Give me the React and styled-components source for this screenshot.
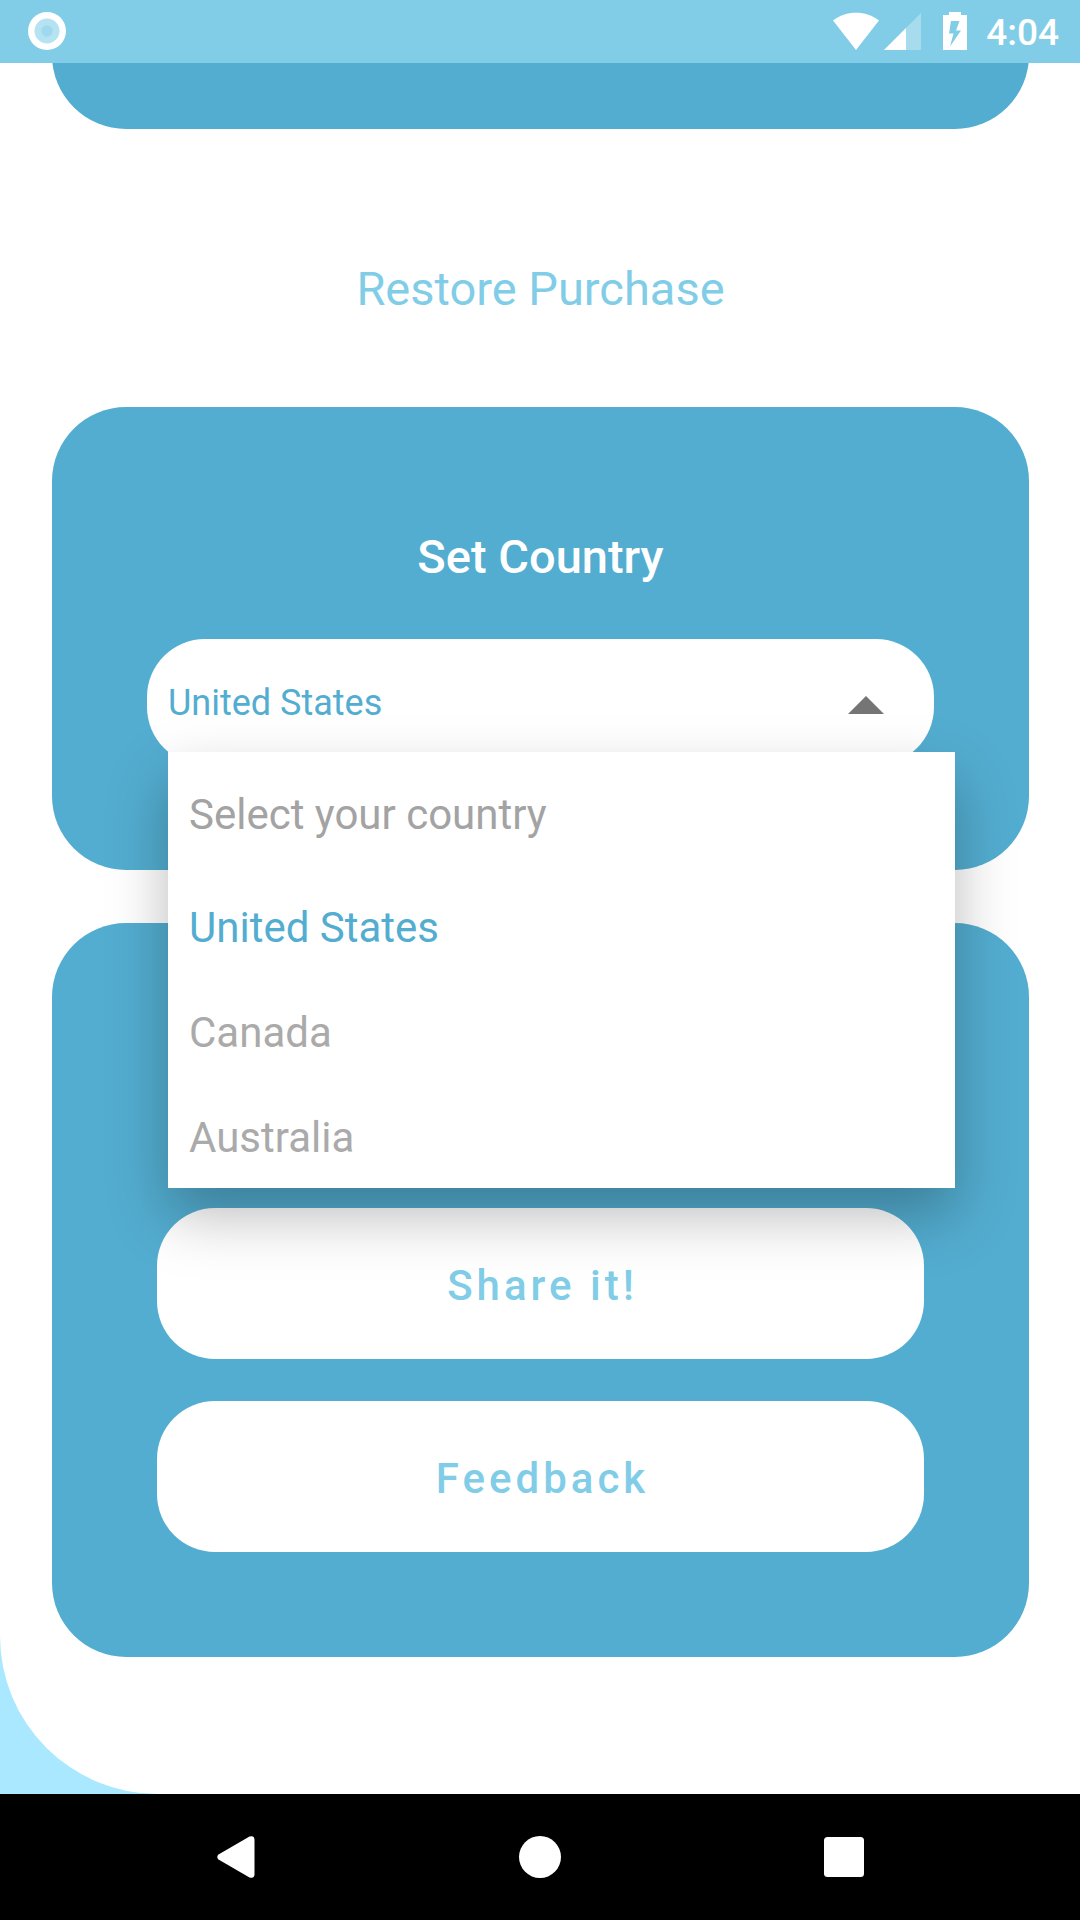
import React, { useState } from "react";
import styled, { createGlobalStyle } from "styled-components";

const colors = {
  sky: "#81cde7",
  paleSky: "#a9e8ff",
  card: "#53add0",
  muted: "#aaaaaa",
  hint: "#a3a3a3",
};

const GlobalStyle = createGlobalStyle`
  *, *::before, *::after { box-sizing: border-box; }
  body { margin: 0; background: ${colors.paleSky}; }
  body, button, select { font-family: Roboto, "Noto Sans", sans-serif; }
`;

const Screen = styled.div`
  display: flex;
  flex-direction: column;
  min-height: 100vh;
  background: ${colors.paleSky};
`;

const StatusBar = styled.header`
  display: flex;
  align-items: center;
  justify-content: space-between;
  height: 63px;
  padding: 0 21px 1px 28px;
  background: ${colors.sky};
  color: #fff;
`;

const StatusGroup = styled.div`
  display: flex;
  align-items: center;
`;

const StatusIcon = styled.svg`
  display: block;
  margin-right: ${(p) => p.$gap || 0}px;
`;

const Clock = styled.time`
  font-size: 37px;
  font-weight: 500;
  line-height: 44px;
  padding-top: 4px;
`;

const Sheet = styled.main`
  flex: 1;
  display: flex;
  flex-direction: column;
  padding: 0 51px 137px 52px;
  overflow: hidden;
  background: #fff;
  border-bottom-left-radius: 158px;
`;

const Card = styled.section`
  display: flex;
  flex-direction: column;
  border-radius: 74px;
  background: ${colors.card};
`;

const ScrolledCard = styled(Card)`
  height: 160px;
  margin-top: -94px;
`;

const CountryCard = styled(Card)`
  padding: 122px 95px 105px;
  margin-bottom: 53px;
`;

const ActionCard = styled(Card)`
  min-height: 734px;
  justify-content: flex-end;
  gap: 42px;
  padding: 105px;
`;

const RestoreButton = styled.button`
  align-self: center;
  margin: 132px 0 90px;
  padding: 0;
  border: 0;
  background: none;
  color: ${colors.sky};
  font-size: 47px;
  line-height: 56px;
`;

const CardTitle = styled.label`
  align-self: center;
  margin-bottom: 54px;
  color: #fff;
  font-size: 47px;
  font-weight: 500;
  line-height: 56px;
`;

const Picker = styled.div`
  position: relative;
`;

const CountrySelect = styled.select`
  display: block;
  width: 100%;
  height: 126px;
  padding: 2px 120px 0 21px;
  border: 0;
  border-radius: 58px;
  outline: none;
  appearance: none;
  background: #fff;
  color: ${colors.card};
  font-size: 36px;
`;

const Caret = styled.svg`
  position: absolute;
  top: 57px;
  right: 50px;
  pointer-events: none;
`;

const Menu = styled.div`
  position: absolute;
  z-index: 1;
  top: 113px;
  left: 21px;
  display: flex;
  flex-direction: column;
  width: 100%;
  background: #fff;
  box-shadow: 0 27px 56px rgba(0, 0, 0, 0.27);
`;

const MenuItem = styled.button`
  height: ${(p) => (p.$hint ? 121 : 105)}px;
  padding: 4px 21px 0;
  border: 0;
  background: none;
  color: ${(p) => (p.$selected ? colors.card : p.$hint ? colors.hint : colors.muted)};
  font-size: 42px;
  text-align: left;
`;

const ActionButton = styled.button`
  height: 151px;
  padding: 4px 0 0 4px;
  border: 0;
  border-radius: 58px;
  background: #fff;
  color: ${colors.sky};
  font-size: 42px;
  font-weight: 500;
  letter-spacing: 4px;
`;

const NavBar = styled.nav`
  display: flex;
  justify-content: center;
  height: 126px;
  background: #000;
`;

const NavButton = styled.button`
  display: flex;
  flex: 0 1 304px;
  align-items: center;
  justify-content: center;
  padding: 0;
  border: 0;
  background: none;
`;

const countries = ["Select your country", "United States", "Canada", "Australia"];

export default function App() {
  const [country, setCountry] = useState("United States");
  const [open, setOpen] = useState(true);

  const choose = (name) => {
    setCountry(name);
    setOpen(false);
  };

  const toggle = (event) => {
    event.preventDefault();
    setOpen(!open);
  };

  return (
    <Screen>
      <GlobalStyle />
      <StatusBar>
        <StatusIcon width="38" height="38" viewBox="0 0 38 38" aria-hidden="true">
          <circle cx="19" cy="19" r="19" fill="#fff" />
          <circle cx="19" cy="19" r="12.5" fill="#b5e3f2" />
          <circle cx="19" cy="19" r="5.7" fill="#a0d9ed" />
        </StatusIcon>
        <StatusGroup>
          <StatusIcon $gap={5} width="46" height="38" viewBox="0 0 46 38" aria-hidden="true">
            <path d="M0 8.5C6.500 3.300 14.500 0.700 23 0.700S39.500 3.300 46 8.500L23 38Z" fill="#fff" />
          </StatusIcon>
          <StatusIcon $gap={22} width="37" height="38" viewBox="0 0 37 38" aria-hidden="true">
            <path d="M0 38L37 1V38Z" fill="#fff" opacity="0.3" />
            <path d="M0 38L22 16V38Z" fill="#fff" />
          </StatusIcon>
          <StatusIcon $gap={19} width="24" height="38" viewBox="0 0 24 38" aria-hidden="true">
            <path
              fillRule="evenodd"
              d="M6 0H18V3H24V38H0V3H6ZM8 9L6 21.500H10.500L7 34.500L18 18.500H13L16.500 9Z"
              fill="#fff"
            />
          </StatusIcon>
          <Clock>4:04</Clock>
        </StatusGroup>
      </StatusBar>

      <Sheet>
        <ScrolledCard />
        <RestoreButton type="button">Restore Purchase</RestoreButton>

        <CountryCard>
          <CardTitle htmlFor="country">Set Country</CardTitle>
          <Picker>
            <CountrySelect
              id="country"
              value={country}
              onMouseDown={toggle}
              onChange={(event) => choose(event.target.value)}
            >
              {countries.map((name) => (
                <option key={name}>{name}</option>
              ))}
            </CountrySelect>
            <Caret width="36" height="18" viewBox="0 0 36 18" aria-hidden="true">
              <path d="M0 18L18 0L36 18Z" fill="#757575" />
            </Caret>
            {open && (
              <Menu role="listbox" aria-label="Set Country">
                {countries.map((name, index) => (
                  <MenuItem
                    key={name}
                    type="button"
                    role="option"
                    aria-selected={name === country}
                    $hint={index === 0}
                    $selected={name === country}
                    onClick={() => choose(name)}
                  >
                    {name}
                  </MenuItem>
                ))}
              </Menu>
            )}
          </Picker>
        </CountryCard>

        <ActionCard>
          <ActionButton type="button">Share it!</ActionButton>
          <ActionButton type="button">Feedback</ActionButton>
        </ActionCard>
      </Sheet>

      <NavBar>
        <NavButton type="button" aria-label="Back">
          <svg width="38" height="42" viewBox="0 0 38 42">
            <path d="M1.500 18.500L32.500 0.600Q37.500 -1 37.500 4V38Q37.500 43 32.500 41.400L1.500 23.500Q-1 21 1.500 18.500Z" fill="#fff" />
          </svg>
        </NavButton>
        <NavButton type="button" aria-label="Home">
          <svg width="42" height="42" viewBox="0 0 42 42">
            <circle cx="21" cy="21" r="21" fill="#fff" />
          </svg>
        </NavButton>
        <NavButton type="button" aria-label="Recent apps">
          <svg width="40" height="40" viewBox="0 0 40 40">
            <rect width="40" height="40" rx="3.5" fill="#fff" />
          </svg>
        </NavButton>
      </NavBar>
    </Screen>
  );
}
